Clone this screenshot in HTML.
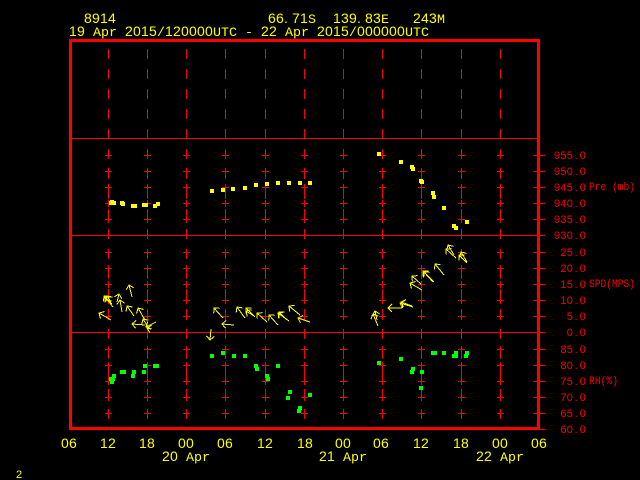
<!DOCTYPE html>
<html><head><meta charset="utf-8"><style>
html,body{margin:0;padding:0;background:#000;width:640px;height:480px;overflow:hidden}
svg{display:block}
text{white-space:pre}
.y{fill:#ff0;font-family:"Liberation Mono",monospace;font-size:13.33px}
.d{fill:#ff0;font-family:"Liberation Sans",sans-serif;font-size:14px;letter-spacing:.22px}
.r{fill:#f00;font-family:"Liberation Sans",sans-serif;font-size:11px}
.l{fill:#f00;font-family:"Liberation Mono",monospace;font-size:10.67px}
</style></head><body>
<svg width="640" height="480" viewBox="0 0 640 480" xmlns="http://www.w3.org/2000/svg">
<defs>
<g id="c" fill="none" stroke="#f00" stroke-width="1" shape-rendering="crispEdges">
<path stroke-dasharray="10 10" d="M.5 49V429"/>
<path d="M-3 155.5H4M.5 152V159M-3 171.5H4M.5 168V175M-3 187.5H4M.5 184V191M-3 203.5H4M.5 200V207M-3 219.5H4M.5 216V223M-3 252.5H4M.5 249V256M-3 268.5H4M.5 265V272M-3 284.5H4M.5 281V288M-3 300.5H4M.5 297V304M-3 316.5H4M.5 313V320M-3 349.5H4M.5 346V353M-3 365.5H4M.5 362V369M-3 381.5H4M.5 378V385M-3 397.5H4M.5 394V401M-3 413.5H4M.5 410V417"/>
</g>
<marker id="h" markerUnits="userSpaceOnUse" orient="auto" overflow="visible" markerWidth="10" markerHeight="10" refX="0" refY="0">
<path d="M4 -4L0 0L4 4" transform="rotate(180)" fill="none" stroke="#ff0" stroke-width="1" shape-rendering="crispEdges"/>
</marker>
</defs>
<rect width="640" height="480" fill="#000"/>
<use href="#c" x="108"/><use href="#c" x="147"/><use href="#c" x="186"/><use href="#c" x="225"/><use href="#c" x="265"/><use href="#c" x="304"/><use href="#c" x="343"/><use href="#c" x="382"/><use href="#c" x="421"/><use href="#c" x="461"/><use href="#c" x="500"/>
<path fill="none" stroke="#f00" shape-rendering="crispEdges" d="M72 138.5H538M72 235.5H545M72 332.5H545M533 155.5H545M533 171.5H545M533 187.5H545M533 203.5H545M533 219.5H545M533 252.5H545M533 268.5H545M533 284.5H545M533 300.5H545M533 316.5H545M533 349.5H545M533 365.5H545M533 381.5H545M533 397.5H545M533 413.5H545M533 429.5H545"/>
<rect x="70.5" y="40.5" width="468" height="388" fill="none" stroke="#f00" stroke-width="3" shape-rendering="crispEdges"/>

<g fill="#ff0" shape-rendering="crispEdges">
<rect x="109" y="201" width="4" height="4"/><rect x="110" y="200" width="4" height="4"/><rect x="112" y="201" width="4" height="4"/><rect x="120" y="201" width="4" height="4"/><rect x="121" y="202" width="4" height="4"/><rect x="131" y="204" width="4" height="4"/><rect x="133" y="204" width="4" height="4"/><rect x="142" y="203" width="4" height="4"/><rect x="144" y="203" width="4" height="4"/><rect x="153" y="204" width="4" height="4"/><rect x="156" y="202" width="4" height="4"/>
<rect x="210" y="189" width="4" height="4"/><rect x="221" y="188" width="4" height="4"/><rect x="231" y="187" width="4" height="4"/><rect x="243" y="186" width="4" height="4"/><rect x="254" y="183" width="4" height="4"/><rect x="265" y="182" width="4" height="4"/><rect x="276" y="181" width="4" height="4"/><rect x="287" y="181" width="4" height="4"/><rect x="298" y="181" width="4" height="4"/><rect x="308" y="181" width="4" height="4"/>
<rect x="377" y="152" width="4" height="4"/><rect x="399" y="160" width="4" height="4"/><rect x="410" y="165" width="4" height="4"/><rect x="411" y="167" width="4" height="4"/><rect x="419" y="179" width="4" height="4"/><rect x="420" y="180" width="4" height="4"/><rect x="431" y="191" width="4" height="4"/><rect x="432" y="195" width="4" height="4"/><rect x="442" y="206" width="4" height="4"/><rect x="452" y="224" width="4" height="4"/><rect x="454" y="226" width="4" height="4"/><rect x="465" y="220" width="4" height="4"/>
</g>

<g fill="#0f0" shape-rendering="crispEdges">
<rect x="112" y="374" width="4" height="4"/><rect x="109" y="377" width="4" height="4"/><rect x="111" y="377" width="4" height="4"/><rect x="110" y="380" width="4" height="4"/><rect x="120" y="370" width="4" height="4"/><rect x="122" y="370" width="4" height="4"/><rect x="132" y="370" width="4" height="4"/><rect x="131" y="374" width="4" height="4"/><rect x="142" y="370" width="4" height="4"/><rect x="143" y="364" width="4" height="4"/><rect x="153" y="364" width="4" height="4"/><rect x="155" y="364" width="4" height="4"/>
<rect x="210" y="354" width="4" height="4"/><rect x="221" y="351" width="4" height="4"/><rect x="232" y="354" width="4" height="4"/><rect x="243" y="354" width="4" height="4"/><rect x="254" y="364" width="4" height="4"/><rect x="255" y="367" width="4" height="4"/><rect x="265" y="374" width="4" height="4"/><rect x="266" y="377" width="4" height="4"/><rect x="276" y="364" width="4" height="4"/>
<rect x="288" y="390" width="4" height="4"/><rect x="286" y="396" width="4" height="4"/><rect x="308" y="393" width="4" height="4"/><rect x="298" y="406" width="4" height="4"/><rect x="297" y="409" width="4" height="4"/>
<rect x="377" y="361" width="4" height="4"/><rect x="399" y="357" width="4" height="4"/><rect x="411" y="367" width="4" height="4"/><rect x="410" y="370" width="4" height="4"/><rect x="420" y="370" width="4" height="4"/><rect x="419" y="386" width="4" height="4"/><rect x="431" y="351" width="4" height="4"/><rect x="433" y="351" width="4" height="4"/><rect x="442" y="351" width="4" height="4"/><rect x="452" y="354" width="4" height="4"/><rect x="454" y="354" width="4" height="4"/><rect x="454" y="351" width="4" height="4"/><rect x="464" y="354" width="4" height="4"/><rect x="465" y="351" width="4" height="4"/>
</g>

<g fill="none" stroke="#ff0" stroke-width="1" shape-rendering="crispEdges">
<path marker-end="url(#h)" d="M111 320L99 313"/>
<path marker-end="url(#h)" d="M113 307L104 296"/>
<path marker-end="url(#h)" d="M112 304L105 297"/>
<path marker-end="url(#h)" d="M111 302L107 296"/>
<path marker-end="url(#h)" d="M117 302L119 294"/>
<path marker-end="url(#h)" d="M122 312L120 300"/>
<path marker-end="url(#h)" d="M132 297L129 285"/>
<path marker-end="url(#h)" d="M134 316L127 306"/>
<path marker-end="url(#h)" d="M145 320L138 308"/>
<path marker-end="url(#h)" d="M145 325L132 324"/>
<path marker-end="url(#h)" d="M148 327L143 319"/>
<path marker-end="url(#h)" d="M156 322L146 327"/>
<path marker-end="url(#h)" d="M151 329L147 328"/>
<path marker-end="url(#h)" d="M211 329L210 340"/>
<path marker-end="url(#h)" d="M234 325L222 324"/>
<path marker-end="url(#h)" d="M223 318L214 308"/>
<path marker-end="url(#h)" d="M245 318L237 307"/>
<path marker-end="url(#h)" d="M255 317L246 308"/>
<path marker-end="url(#h)" d="M254 316L246 311"/>
<path marker-end="url(#h)" d="M267 322L257 313"/>
<path marker-end="url(#h)" d="M278 325L269 315"/>
<path marker-end="url(#h)" d="M289 321L278 313"/>
<path marker-end="url(#h)" d="M287 320L279 312"/>
<path marker-end="url(#h)" d="M300 315L289 306"/>
<path marker-end="url(#h)" d="M310 322L298 318"/>
<path marker-end="url(#h)" d="M378 326L373 314"/>
<path marker-end="url(#h)" d="M377 320L375 311"/>
<path marker-end="url(#h)" d="M402 308L388 308"/>
<path marker-end="url(#h)" d="M413 307L400 303"/>
<path marker-end="url(#h)" d="M412 306L401 302"/>
<path marker-end="url(#h)" d="M422 290L410 283"/>
<path marker-end="url(#h)" d="M421 284L412 276"/>
<path marker-end="url(#h)" d="M434 282L423 271"/>
<path marker-end="url(#h)" d="M433 282L424 272"/>
<path marker-end="url(#h)" d="M444 275L435 264"/>
<path marker-end="url(#h)" d="M456 258L446 249"/>
<path marker-end="url(#h)" d="M454 255L448 245"/>
<path marker-end="url(#h)" d="M467 263L459 255"/>
<path marker-end="url(#h)" d="M467 262L461 252"/>
</g>

<text class="d" x="84" y="23">8914</text>
<text class="d" y="23" x="268 276 284 292 300">66.71</text><text class="y" x="308" y="23">S</text>
<text class="d" y="23" x="333 341 349 357 365 373">139.83</text><text class="y" x="381" y="23">E</text>
<text class="d" x="413" y="23">243</text><text class="y" x="437" y="23">M</text>

<text class="d" x="69" y="36">19</text><text class="y" x="93" y="36">Apr</text>
<text class="d" x="125" y="36">2015</text><text class="y" x="157" y="36">/</text><text class="d" x="165" y="36">120000</text><text class="y" x="213" y="36">UTC - </text>
<text class="d" x="261" y="36">22</text><text class="y" x="285" y="36">Apr</text>
<text class="d" x="317" y="36">2015</text><text class="y" x="349" y="36">/</text><text class="d" x="357" y="36">000000</text><text class="y" x="405" y="36">UTC</text>

<text class="r" y="159" x="554 560.4 566.8 574.6 579.6">955.0</text>
<text class="r" y="175" x="554 560.4 566.8 574.6 579.6">950.0</text>
<text class="r" y="191" x="554 560.4 566.8 574.6 579.6">945.0</text>
<text class="r" y="207" x="554 560.4 566.8 574.6 579.6">940.0</text>
<text class="r" y="223" x="554 560.4 566.8 574.6 579.6">935.0</text>
<text class="r" y="239" x="554 560.4 566.8 574.6 579.6">930.0</text>
<text class="r" y="256" x="560.4 566.8 574.6 579.6">25.0</text>
<text class="r" y="272" x="560.4 566.8 574.6 579.6">20.0</text>
<text class="r" y="288" x="560.4 566.8 574.6 579.6">15.0</text>
<text class="r" y="304" x="560.4 566.8 574.6 579.6">10.0</text>
<text class="r" y="320" x="566.8 574.6 579.6">5.0</text>
<text class="r" y="336" x="566.8 574.6 579.6">0.0</text>
<text class="r" y="353" x="560.4 566.8 574.6 579.6">85.0</text>
<text class="r" y="369" x="560.4 566.8 574.6 579.6">80.0</text>
<text class="r" y="385" x="560.4 566.8 574.6 579.6">75.0</text>
<text class="r" y="401" x="560.4 566.8 574.6 579.6">70.0</text>
<text class="r" y="417" x="560.4 566.8 574.6 579.6">65.0</text>
<text class="r" y="433" x="560.4 566.8 574.6 579.6">60.0</text>
<text class="l" x="589" y="190" textLength="46" lengthAdjust="spacingAndGlyphs">Pre (mb)</text>
<text class="l" x="589" y="287" textLength="46" lengthAdjust="spacingAndGlyphs">SPD(MPS)</text>
<text class="l" x="589" y="384" textLength="29" lengthAdjust="spacingAndGlyphs">RH(%)</text>

<text class="d" x="61" y="448">06</text>
<text class="d" x="100" y="448">12</text>
<text class="d" x="139" y="448">18</text>
<text class="d" x="178" y="448">00</text>
<text class="d" x="217" y="448">06</text>
<text class="d" x="257" y="448">12</text>
<text class="d" x="297" y="448">18</text>
<text class="d" x="335" y="448">00</text>
<text class="d" x="373" y="448">06</text>
<text class="d" x="413" y="448">12</text>
<text class="d" x="453" y="448">18</text>
<text class="d" x="492" y="448">00</text>
<text class="d" x="531" y="448">06</text>
<text class="d" x="162" y="461">20</text><text class="y" x="186" y="461">Apr</text>
<text class="d" x="319" y="461">21</text><text class="y" x="343" y="461">Apr</text>
<text class="d" x="476" y="461">22</text><text class="y" x="500" y="461">Apr</text>
<text class="r" x="16" y="478" style="fill:#ff0">2</text>
</svg>
</body></html>
